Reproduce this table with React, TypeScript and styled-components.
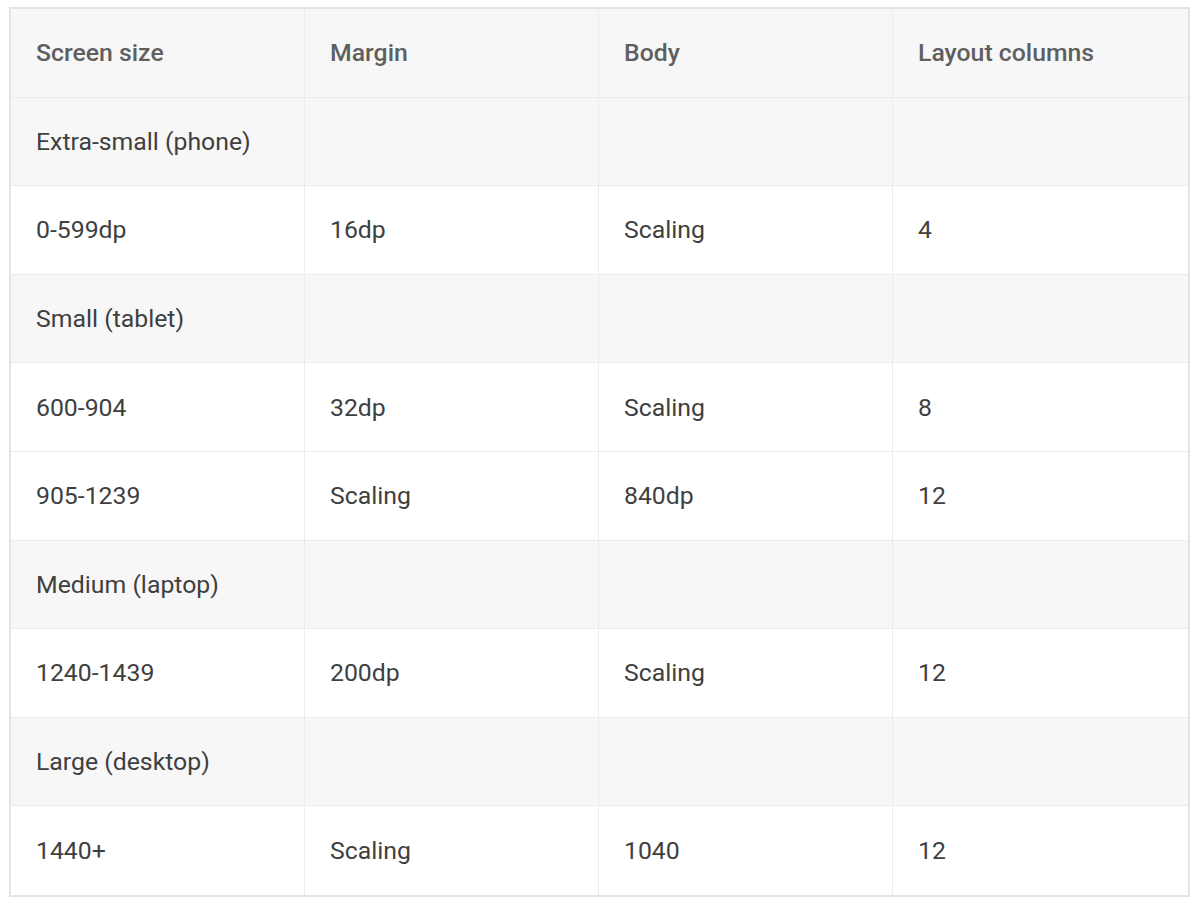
import React from "react";
import styled, { createGlobalStyle } from "styled-components";

const Global = createGlobalStyle`
  html, body { margin: 0; padding: 0; background: #ffffff; }
  body { font-family: Roboto, "Noto Sans", Arial, sans-serif; }
`;

const Page = styled.div`
  padding: 7px 0 0 9px;
`;

const Table = styled.div`
  width: 1181px;
  box-sizing: border-box;
  border: 2px solid #e4e4e4;
  display: grid;
  grid-template-columns: 294px 294px 294px 1fr;
  grid-auto-rows: 88.6px;
  background: #fff;
`;

const Cell = styled.div<{ $shade?: boolean; $head?: boolean; $lastCol?: boolean; $lastRow?: boolean }>`
  display: flex;
  align-items: center;
  padding-left: 25px;
  box-sizing: border-box;
  background: ${(p) => (p.$shade ? "#f7f7f7" : "#ffffff")};
  border-right: ${(p) => (p.$lastCol ? "none" : "1px solid #ececec")};
  border-bottom: ${(p) => (p.$lastRow ? "none" : "1px solid #ececec")};
  font-size: 24.8px;
  font-weight: ${(p) => (p.$head ? 500 : 400)};
  color: ${(p) => (p.$head ? "#5f5f5f" : "#3f3f3f")};
  white-space: nowrap;
`;

type Row = { cells: string[]; shade: boolean; head?: boolean };

const rows: Row[] = [
  { cells: ["Screen size", "Margin", "Body", "Layout columns"], shade: true, head: true },
  { cells: ["Extra-small (phone)", "", "", ""], shade: true },
  { cells: ["0-599dp", "16dp", "Scaling", "4"], shade: false },
  { cells: ["Small (tablet)", "", "", ""], shade: true },
  { cells: ["600-904", "32dp", "Scaling", "8"], shade: false },
  { cells: ["905-1239", "Scaling", "840dp", "12"], shade: false },
  { cells: ["Medium (laptop)", "", "", ""], shade: true },
  { cells: ["1240-1439", "200dp", "Scaling", "12"], shade: false },
  { cells: ["Large (desktop)", "", "", ""], shade: true },
  { cells: ["1440+", "Scaling", "1040", "12"], shade: false },
];

export default function App() {
  return (
    <>
      <Global />
      <Page>
        <Table>
          {rows.map((r, ri) =>
            r.cells.map((c, ci) => (
              <Cell
                key={`${ri}-${ci}`}
                $shade={r.shade}
                $head={r.head}
                $lastCol={ci === 3}
                $lastRow={ri === rows.length - 1}
              >
                {c}
              </Cell>
            ))
          )}
        </Table>
      </Page>
    </>
  );
}
